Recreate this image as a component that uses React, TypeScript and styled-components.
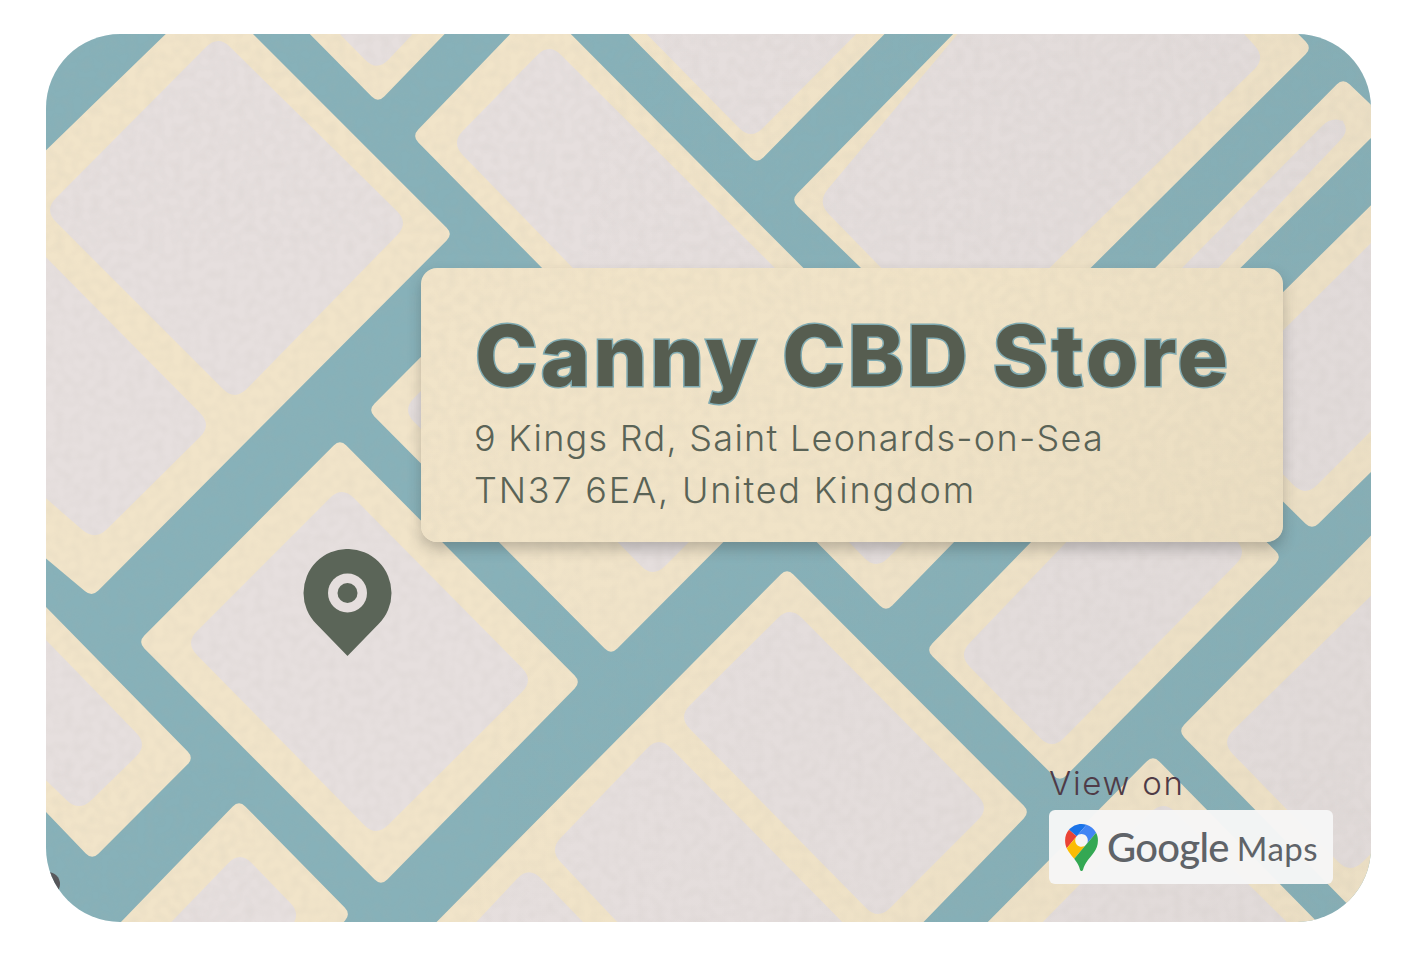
import React from "react";
import styled, { createGlobalStyle } from "styled-components";

const Global = createGlobalStyle`
  html, body { margin: 0; padding: 0; background: #fff; }
  body { font-family: "Inter", "Liberation Sans", sans-serif; }
`;

type P = [number, number];

function rounded(points: P[], r: number): string {
  const n = points.length;
  let d = "";
  points.forEach((p, i) => {
    const a = points[(i + n - 1) % n];
    const b = points[(i + 1) % n];
    const la = Math.hypot(a[0] - p[0], a[1] - p[1]);
    const lb = Math.hypot(b[0] - p[0], b[1] - p[1]);
    const s: P = [p[0] + ((a[0] - p[0]) / la) * r, p[1] + ((a[1] - p[1]) / la) * r];
    const e: P = [p[0] + ((b[0] - p[0]) / lb) * r, p[1] + ((b[1] - p[1]) / lb) * r];
    d += `${i === 0 ? "M" : "L"}${s[0]} ${s[1]}Q${p[0]} ${p[1]} ${e[0]} ${e[1]}`;
  });
  return d + "Z";
}

type Block = { outer: P[]; inners: P[][] };

const blocks: Block[] = [
  { outer: [[210, -9], [453, 234], [92, 597], [-180, 370]], inners: [
    [[218, 35], [409, 223], [235, 401], [44, 210]],
    [[212, 425], [95, 541], [-60, 406], [-60, 150]],
  ] },
  { outer: [[290, 14], [378, 103], [464, 14], [378, -60]], inners: [[[330, 24], [377, 72], [422, 24], [376, -20]]] },
  { outer: [[540, 3], [860, 325], [680, 408], [412, 136]], inners: [[[549, 43], [790, 283], [645, 342], [451, 143]]] },
  { outer: [[600, 5], [757, 164], [915, 3], [757, -100]], inners: [[[620, 7], [751, 140], [880, 10], [750, -100]]] },
  { outer: [[1125, -142], [1312, 48], [1000, 358], [930, 335], [791, 200]], inners: [[[1095, -130], [1266, 58], [1000, 316], [930, 318], [817, 202]]] },
  { outer: [[1343, 78], [1388, 121], [1160, 348], [1080, 344]], inners: [[[1334, 114], [1352, 128], [1144, 346], [1105, 346]]] },
  { outer: [[1200, 374], [1500, 78], [1500, 345], [1312, 530], [1200, 420]], inners: [[[1220, 393], [1500, 115], [1500, 302], [1305, 497], [1230, 420]]] },
  { outer: [[368, 410], [430, 348], [800, 465], [611, 655]], inners: [
    [[402, 410], [440, 372], [500, 440], [465, 472]],
    [[653, 578], [590, 514], [650, 460], [725, 506]],
  ] },
  { outer: [[886, 612], [780, 505], [886, 400], [990, 505]], inners: [[[876, 570], [820, 512], [876, 460], [930, 516]]] },
  { outer: [[1145, 425], [1282, 557], [1060, 782], [926, 650]], inners: [[[1150, 455], [1248, 552], [1052, 750], [958, 655]]] },
  { outer: [[787, 568], [1030, 812], [790, 1060], [300, 1060]], inners: [
    [[790, 606], [990, 808], [878, 920], [678, 717]],
    [[659, 736], [860, 940], [640, 946], [549, 850]],
    [[529, 866], [610, 950], [450, 950]],
  ] },
  { outer: [[340, 439], [581, 682], [381, 886], [138, 642]], inners: [[[342, 486], [534, 680], [376, 837], [185, 643]]] },
  { outer: [[-100, 458], [194, 758], [92, 860], [-100, 660]], inners: [[[-100, 490], [148, 745], [79, 812], [-100, 640]]] },
  { outer: [[239, 800], [351, 914], [300, 970], [60, 985]], inners: [[[240, 851], [302, 915], [250, 970], [120, 975]]] },
  { outer: [[1178, 731], [1500, 405], [1500, 1060]], inners: [[[1221, 742], [1500, 470], [1500, 730], [1350, 874]]] },
  { outer: [[1153, 755], [1330, 935], [970, 940]], inners: [[[1163, 800], [1300, 935], [1030, 935]]] },
];

const Page = styled.main`
  width: 1417px;
  height: 957px;
  padding: 34px 46px 35px;
  box-sizing: border-box;
  background: #fff;
  overflow: hidden;
`;

const MapCard = styled.section`
  position: relative;
  width: 1325px;
  height: 888px;
  border-radius: 74px;
  overflow: hidden;
  background: #87b1b9;
`;

const MapArt = styled.svg`
  display: block;
  width: 100%;
  height: 100%;
`;

const Grain = styled.svg`
  position: absolute;
  inset: 0;
  width: 100%;
  height: 100%;
  pointer-events: none;
`;

const Shade = styled.div`
  position: absolute;
  inset: 0;
  background: linear-gradient(100deg, rgba(90, 90, 80, 0) 35%, rgba(90, 90, 80, 0.04) 100%);
  pointer-events: none;
`;

const Pin = styled.svg`
  position: absolute;
  left: 257px;
  top: 515px;
  width: 90px;
  height: 109px;
`;

const InfoShadow = styled.div`
  position: absolute;
  left: 375px;
  top: 234px;
  width: 862px;
  height: 274px;
  border-radius: 16px;
  box-shadow: 0 7px 14px rgba(40, 40, 40, 0.26);
`;

const InfoCard = styled.article`
  position: absolute;
  left: 375px;
  top: 234px;
  width: 862px;
  height: 274px;
  box-sizing: border-box;
  padding: 38px 0 0 53px;
  border-radius: 16px;
  overflow: hidden;
  background: linear-gradient(125deg, #f1e4c9 0%, #f0e3c7 55%, #eaddc1 100%);
`;

const Title = styled.h1`
  position: relative;
  margin: 0 0 6px 1px;
  font-family: "Inter", "Liberation Sans", sans-serif;
  font-size: 84px;
  font-weight: 800;
  line-height: 100px;
  letter-spacing: 3.3px;
  color: #565d50;
  white-space: nowrap;
  -webkit-text-stroke: 3px #80abb2;
  paint-order: stroke fill;
`;

const AddressLine = styled.p<{ $tracking: number }>`
  position: relative;
  margin: 0;
  font-family: "Inter", "Liberation Sans", sans-serif;
  font-size: 36px;
  font-weight: 300;
  line-height: 52px;
  letter-spacing: ${(p) => p.$tracking}px;
  color: #5a6356;
  white-space: nowrap;
`;

const ViewBlock = styled.aside`
  position: absolute;
  left: 1003px;
  top: 727px;
  display: flex;
  flex-direction: column;
  align-items: flex-start;
`;

const ViewLabel = styled.span`
  font-family: "Inter", "Liberation Sans", sans-serif;
  font-size: 33px;
  font-weight: 300;
  line-height: 44px;
  letter-spacing: 1.7px;
  color: #4f3b47;
  margin-bottom: 5px;
`;

const Badge = styled.div`
  display: flex;
  align-items: center;
  box-sizing: border-box;
  width: 284px;
  height: 74px;
  padding-left: 16px;
  border-radius: 6px;
  background: rgba(246, 246, 246, 0.97);
`;

const MapsIcon = styled.svg`
  width: 33px;
  height: 47px;
  flex: none;
`;

const GoogleWord = styled.span`
  margin-left: 9px;
  font-family: "Lato", "Liberation Sans", sans-serif;
  font-size: 40px;
  font-weight: 500;
  line-height: 1;
  letter-spacing: -0.7px;
  color: #5f6368;
`;

const MapsWord = styled.span`
  margin-left: 8px;
  margin-top: 3px;
  font-family: "Lato", "Liberation Sans", sans-serif;
  font-size: 33px;
  font-weight: 400;
  line-height: 1;
  letter-spacing: 0.5px;
  color: #5f6368;
`;

const GrainLayer = ({ id, opacity }: { id: string; opacity: number }) => (
  <Grain aria-hidden="true">
    <filter id={id} x="0" y="0" width="100%" height="100%">
      <feTurbulence type="fractalNoise" baseFrequency="0.11" numOctaves="1" seed="4" />
      <feColorMatrix values="0 0 0 0 0.42  0 0 0 0 0.40  0 0 0 0 0.36  1.4 0 0 0 -0.5" />
    </filter>
    <rect width="100%" height="100%" filter={`url(#${id})`} opacity={opacity} />
  </Grain>
);

export default function App() {
  return (
    <Page>
      <Global />
      <MapCard>
        <MapArt viewBox="46 34 1325 888" aria-hidden="true">
          {blocks.map((b, i) => (
            <g key={i}>
              <path d={rounded(b.outer, 9)} fill="#f1e4c9" />
              {b.inners.map((inner, j) => (
                <path key={j} d={rounded(inner, 17)} fill="#e6dfde" />
              ))}
            </g>
          ))}
          <circle cx="48" cy="884" r="12" fill="#55565a" />
        </MapArt>
        <GrainLayer id="paper-map" opacity={0.12} />
        <Shade />
        <Pin viewBox="303 549 90 109" aria-hidden="true">
          <path d="M347.5 656 L316.4 624.1 A44 44 0 1 1 378.6 624.1 Z" fill="#5b6558" />
          <circle cx="347.5" cy="593" r="19.5" fill="#e5dedd" />
          <circle cx="347.5" cy="593" r="10" fill="#5b6558" />
        </Pin>
        <InfoShadow />
        <InfoCard>
          <GrainLayer id="paper-card" opacity={0.12} />
          <Title>Canny CBD Store</Title>
          <AddressLine $tracking={1.28}>9 Kings Rd, Saint Leonards-on-Sea</AddressLine>
          <AddressLine $tracking={1.8}>TN37 6EA, United Kingdom</AddressLine>
        </InfoCard>
        <ViewBlock>
          <ViewLabel>View on</ViewLabel>
          <Badge>
            <MapsIcon viewBox="0 0 92.3 132.3" aria-hidden="true">
              <path fill="#1a73e8" d="M60.2 2.2C55.8.8 51 0 46.1 0 32 0 19.3 6.4 10.8 16.5l21.8 18.3L60.2 2.2z" />
              <path fill="#ea4335" d="M10.8 16.5C4.1 24.5 0 34.9 0 46.1c0 8.7 1.7 15.7 4.6 22l28-33.3-21.8-18.3z" />
              <path fill="#4285f4" d="M46.2 28.5c9.8 0 17.7 7.9 17.7 17.7 0 4.3-1.6 8.3-4.2 11.4 0 0 13.9-16.6 27.5-32.7-5.6-10.8-15.3-19-27-22.7L32.6 34.8c3.3-3.8 8.1-6.3 13.6-6.3" />
              <path fill="#fbbc04" d="M46.2 63.8c-9.8 0-17.7-7.9-17.7-17.7 0-4.3 1.5-8.3 4.1-11.3l-28 33.3c4.8 10.6 12.8 19.2 21 29.9l34.1-40.5c-3.3 3.9-8.1 6.3-13.5 6.3" />
              <path fill="#34a853" d="M59.1 109.2c15.4-24.1 33.3-35 33.3-63 0-7.7-1.9-14.9-5.2-21.3L25.6 98c2.6 3.4 5.3 7.3 7.9 11.3 9.4 14.5 6.8 23.1 12.8 23.1s3.4-8.7 12.8-23.2" />
            </MapsIcon>
            <GoogleWord>Google</GoogleWord>
            <MapsWord>Maps</MapsWord>
          </Badge>
        </ViewBlock>
      </MapCard>
    </Page>
  );
}
